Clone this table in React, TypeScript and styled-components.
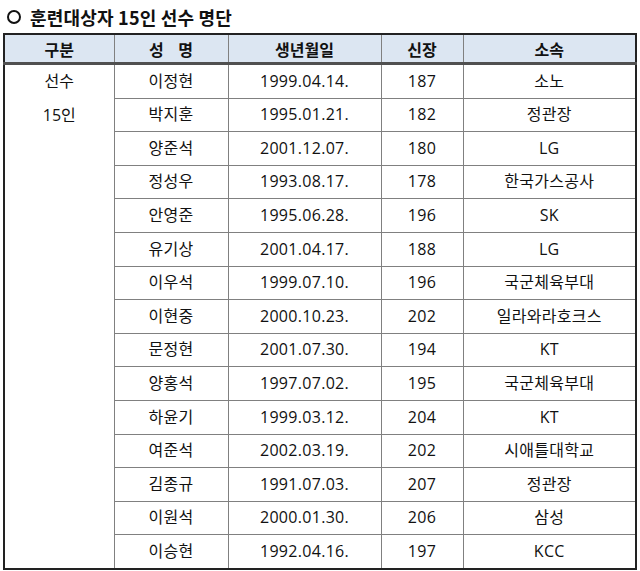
import React from 'react'
import styled, { createGlobalStyle } from 'styled-components'

const GlobalStyle = createGlobalStyle`
  body {
    margin: 0;
    background: #ffffff;
    font-family: 'Open Sans', 'Noto Sans CJK KR', sans-serif;
    color: #111;
  }
`

const Page = styled.div`
  padding: 0 3px;
  width: 634px;
`

const Title = styled.h2`
  display: flex;
  align-items: center;
  gap: 9px;
  height: 33px;
  margin: 0;
  padding-left: 4px;
  font-family: 'Noto Sans CJK KR', sans-serif;
  font-size: 18px;
  font-weight: 700;
  letter-spacing: 0.2px;
`

const Bullet = styled.span`
  width: 10px;
  height: 10px;
  border: 2px solid #111;
  border-radius: 50%;
`

const Table = styled.table`
  width: 100%;
  border-collapse: collapse;
  table-layout: fixed;
  border: 2px solid #222;
`

const Th = styled.th`
  height: 27px;
  padding: 0;
  background: #dce6f2;
  border-left: 1px solid #808080;
  border-bottom: 3px solid #505050;
  font-family: 'Noto Sans CJK KR', sans-serif;
  font-size: 16px;
  font-weight: 700;
  text-align: center;
  &:first-child {
    border-left: none;
  }
`

const Td = styled.td`
  height: 32.6px;
  padding: 0;
  border-left: 1px solid #808080;
  border-top: 1px solid #808080;
  font-size: 16px;
  letter-spacing: 0.3px;
  text-align: center;
  vertical-align: middle;
  line-height: 1.2;
`

const GroupCell = styled.td`
  padding: 0;
  font-size: 16px;
  text-align: center;
  vertical-align: top;
  line-height: 33.6px;
`

type Player = [string, string, number, string]

const players: Player[] = [
  ['이정현', '1999.04.14.', 187, '소노'],
  ['박지훈', '1995.01.21.', 182, '정관장'],
  ['양준석', '2001.12.07.', 180, 'LG'],
  ['정성우', '1993.08.17.', 178, '한국가스공사'],
  ['안영준', '1995.06.28.', 196, 'SK'],
  ['유기상', '2001.04.17.', 188, 'LG'],
  ['이우석', '1999.07.10.', 196, '국군체육부대'],
  ['이현중', '2000.10.23.', 202, '일라와라호크스'],
  ['문정현', '2001.07.30.', 194, 'KT'],
  ['양홍석', '1997.07.02.', 195, '국군체육부대'],
  ['하윤기', '1999.03.12.', 204, 'KT'],
  ['여준석', '2002.03.19.', 202, '시애틀대학교'],
  ['김종규', '1991.07.03.', 207, '정관장'],
  ['이원석', '2000.01.30.', 206, '삼성'],
  ['이승현', '1992.04.16.', 197, 'KCC'],
]

const App = () => {
  return (
    <Page>
      <GlobalStyle />
      <Title>
        <Bullet />
        훈련대상자 15인 선수 명단
      </Title>
      <Table>
        <colgroup>
          <col style={{ width: 110 }} />
          <col style={{ width: 114 }} />
          <col style={{ width: 153 }} />
          <col style={{ width: 82 }} />
          <col />
        </colgroup>
        <thead>
          <tr>
            <Th>구분</Th>
            <Th>성&nbsp;&nbsp;&nbsp;&nbsp;명</Th>
            <Th>생년월일</Th>
            <Th>신장</Th>
            <Th>소속</Th>
          </tr>
        </thead>
        <tbody>
          {players.map(([name, birth, height, team], i) => (
            <tr key={name}>
              {i === 0 && (
                <GroupCell rowSpan={players.length}>
                  선수
                  <br />
                  15인
                </GroupCell>
              )}
              <Td>{name}</Td>
              <Td>{birth}</Td>
              <Td>{height}</Td>
              <Td>{team}</Td>
            </tr>
          ))}
        </tbody>
      </Table>
    </Page>
  )
}

export default App
